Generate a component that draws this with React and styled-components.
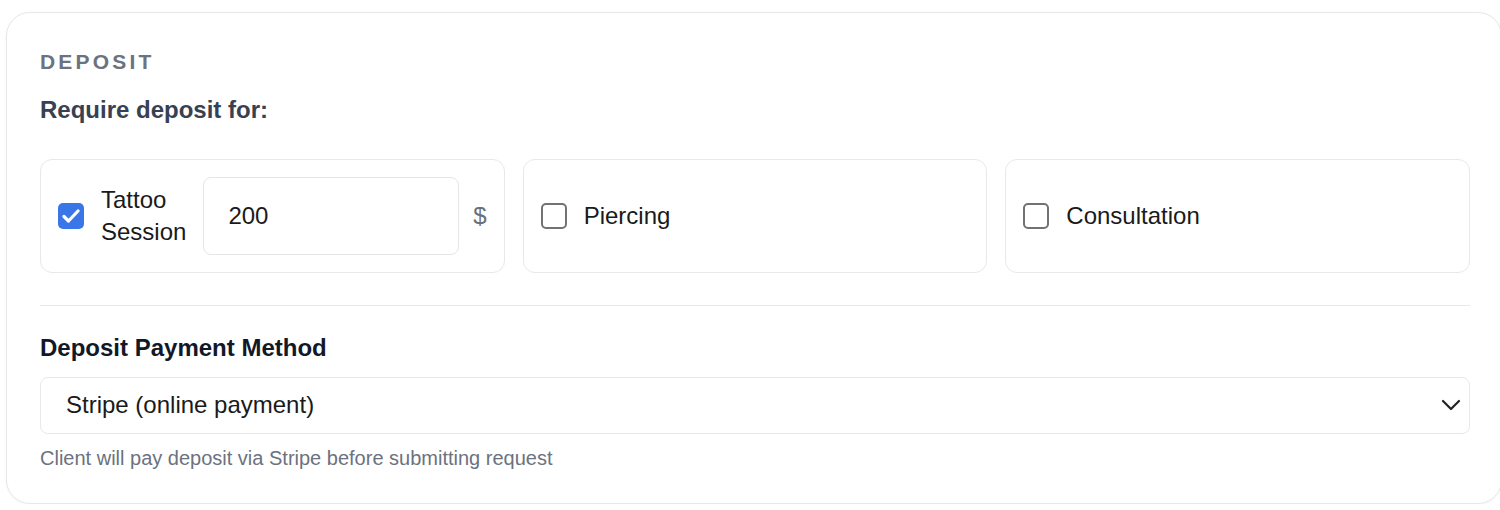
import styled, { createGlobalStyle } from 'styled-components';

const GlobalStyle = createGlobalStyle`
  body {
    margin: 0;
    background: #fff;
    overflow: hidden;
    font-family: 'Liberation Sans', Arial, Helvetica, sans-serif;
  }
`;

const Page = styled.div`
  padding: 12px 0 0 6px;
`;

const Card = styled.section`
  box-sizing: border-box;
  width: 1496px;
  border: 1px solid #e7e7e9;
  border-radius: 24px;
  padding: 33px 31px 30px 33px;
  background: #fff;
  box-shadow: 0 1px 3px rgba(0, 0, 0, 0.04);
`;

const SectionTitle = styled.h2`
  margin: 0 0 14px;
  font-size: 21px;
  line-height: 31.5px;
  font-weight: 700;
  letter-spacing: 3.2px;
  color: #6b7280;
`;

const SubLabel = styled.div`
  margin-bottom: 31px;
  font-size: 24px;
  line-height: 36px;
  font-weight: 700;
  color: #374151;
`;

const Options = styled.div`
  display: grid;
  grid-template-columns: repeat(3, 1fr);
  gap: 18px;
`;

const OptionCard = styled.label`
  box-sizing: border-box;
  display: flex;
  align-items: center;
  gap: 17px;
  height: 114px;
  padding: 17px;
  border: 1px solid #e8e8ea;
  border-radius: 12px;
`;

const Box = styled.span`
  box-sizing: border-box;
  flex: 0 0 26px;
  width: 26px;
  height: 26px;
  border-radius: 5px;
  display: flex;
  align-items: center;
  justify-content: center;
  background: ${(p) => (p.$checked ? '#3b76e8' : '#fff')};
  border: ${(p) => (p.$checked ? 'none' : '2px solid #727272')};
`;

const OptionText = styled.span`
  font-size: 24px;
  line-height: 32px;
  color: #1a1a1a;
  ${(p) => p.$narrow && 'width: min-content; flex: 0 0 auto;'}
`;

const AmountInput = styled.div`
  box-sizing: border-box;
  flex: 1;
  min-width: 0;
  height: 78px;
  display: flex;
  align-items: center;
  padding-left: 24px;
  border: 1px solid #e5e5e7;
  border-radius: 8px;
  font-size: 24px;
  color: #1a1a1a;
`;

const Currency = styled.span`
  margin-left: -3px;
  font-size: 24px;
  color: #6b6f76;
`;

const Divider = styled.hr`
  margin: 32px 0 0;
  border: none;
  border-top: 1px solid #e8e8ea;
`;

const FieldLabel = styled.div`
  margin: 24px 0 11px;
  font-size: 24px;
  line-height: 36px;
  font-weight: 700;
  color: #111827;
`;

const Select = styled.div`
  box-sizing: border-box;
  height: 57px;
  display: flex;
  align-items: center;
  justify-content: space-between;
  padding: 0 8px 0 25px;
  border: 1px solid #e8e8ea;
  border-radius: 8px;
  font-size: 24px;
  color: #1a1a1a;
`;

const Hint = styled.p`
  margin: 9px 0 0;
  font-size: 20px;
  line-height: 30px;
  color: #6b7280;
`;

function Checkbox({ checked }) {
  return (
    <Box $checked={checked}>
      {checked && (
        <svg width="18" height="14" viewBox="0 0 18 14">
          <polyline
            points="2,7.5 6.5,12 16,2"
            fill="none"
            stroke="#fff"
            strokeWidth="3.2"
            strokeLinecap="round"
            strokeLinejoin="round"
          />
        </svg>
      )}
    </Box>
  );
}

const options = [
  { id: 1, title: 'Tattoo Session', checked: true, amount: '200' },
  { id: 2, title: 'Piercing', checked: false },
  { id: 3, title: 'Consultation', checked: false },
];

export default function App() {
  return (
    <Page>
      <GlobalStyle />
      <Card>
        <SectionTitle>DEPOSIT</SectionTitle>
        <SubLabel>Require deposit for:</SubLabel>
        <Options>
          {options.map(({ id, title, checked, amount }) => (
            <OptionCard key={id}>
              <Checkbox checked={checked} />
              <OptionText $narrow={!!amount}>{title}</OptionText>
              {amount && (
                <>
                  <AmountInput>{amount}</AmountInput>
                  <Currency>$</Currency>
                </>
              )}
            </OptionCard>
          ))}
        </Options>
        <Divider />
        <FieldLabel>Deposit Payment Method</FieldLabel>
        <Select>
          <span>Stripe (online payment)</span>
          <svg width="20" height="12" viewBox="0 0 20 12">
            <polyline
              points="2,2 10,10 18,2"
              fill="none"
              stroke="#222"
              strokeWidth="2.2"
              strokeLinecap="round"
              strokeLinejoin="round"
            />
          </svg>
        </Select>
        <Hint>Client will pay deposit via Stripe before submitting request</Hint>
      </Card>
    </Page>
  );
}
